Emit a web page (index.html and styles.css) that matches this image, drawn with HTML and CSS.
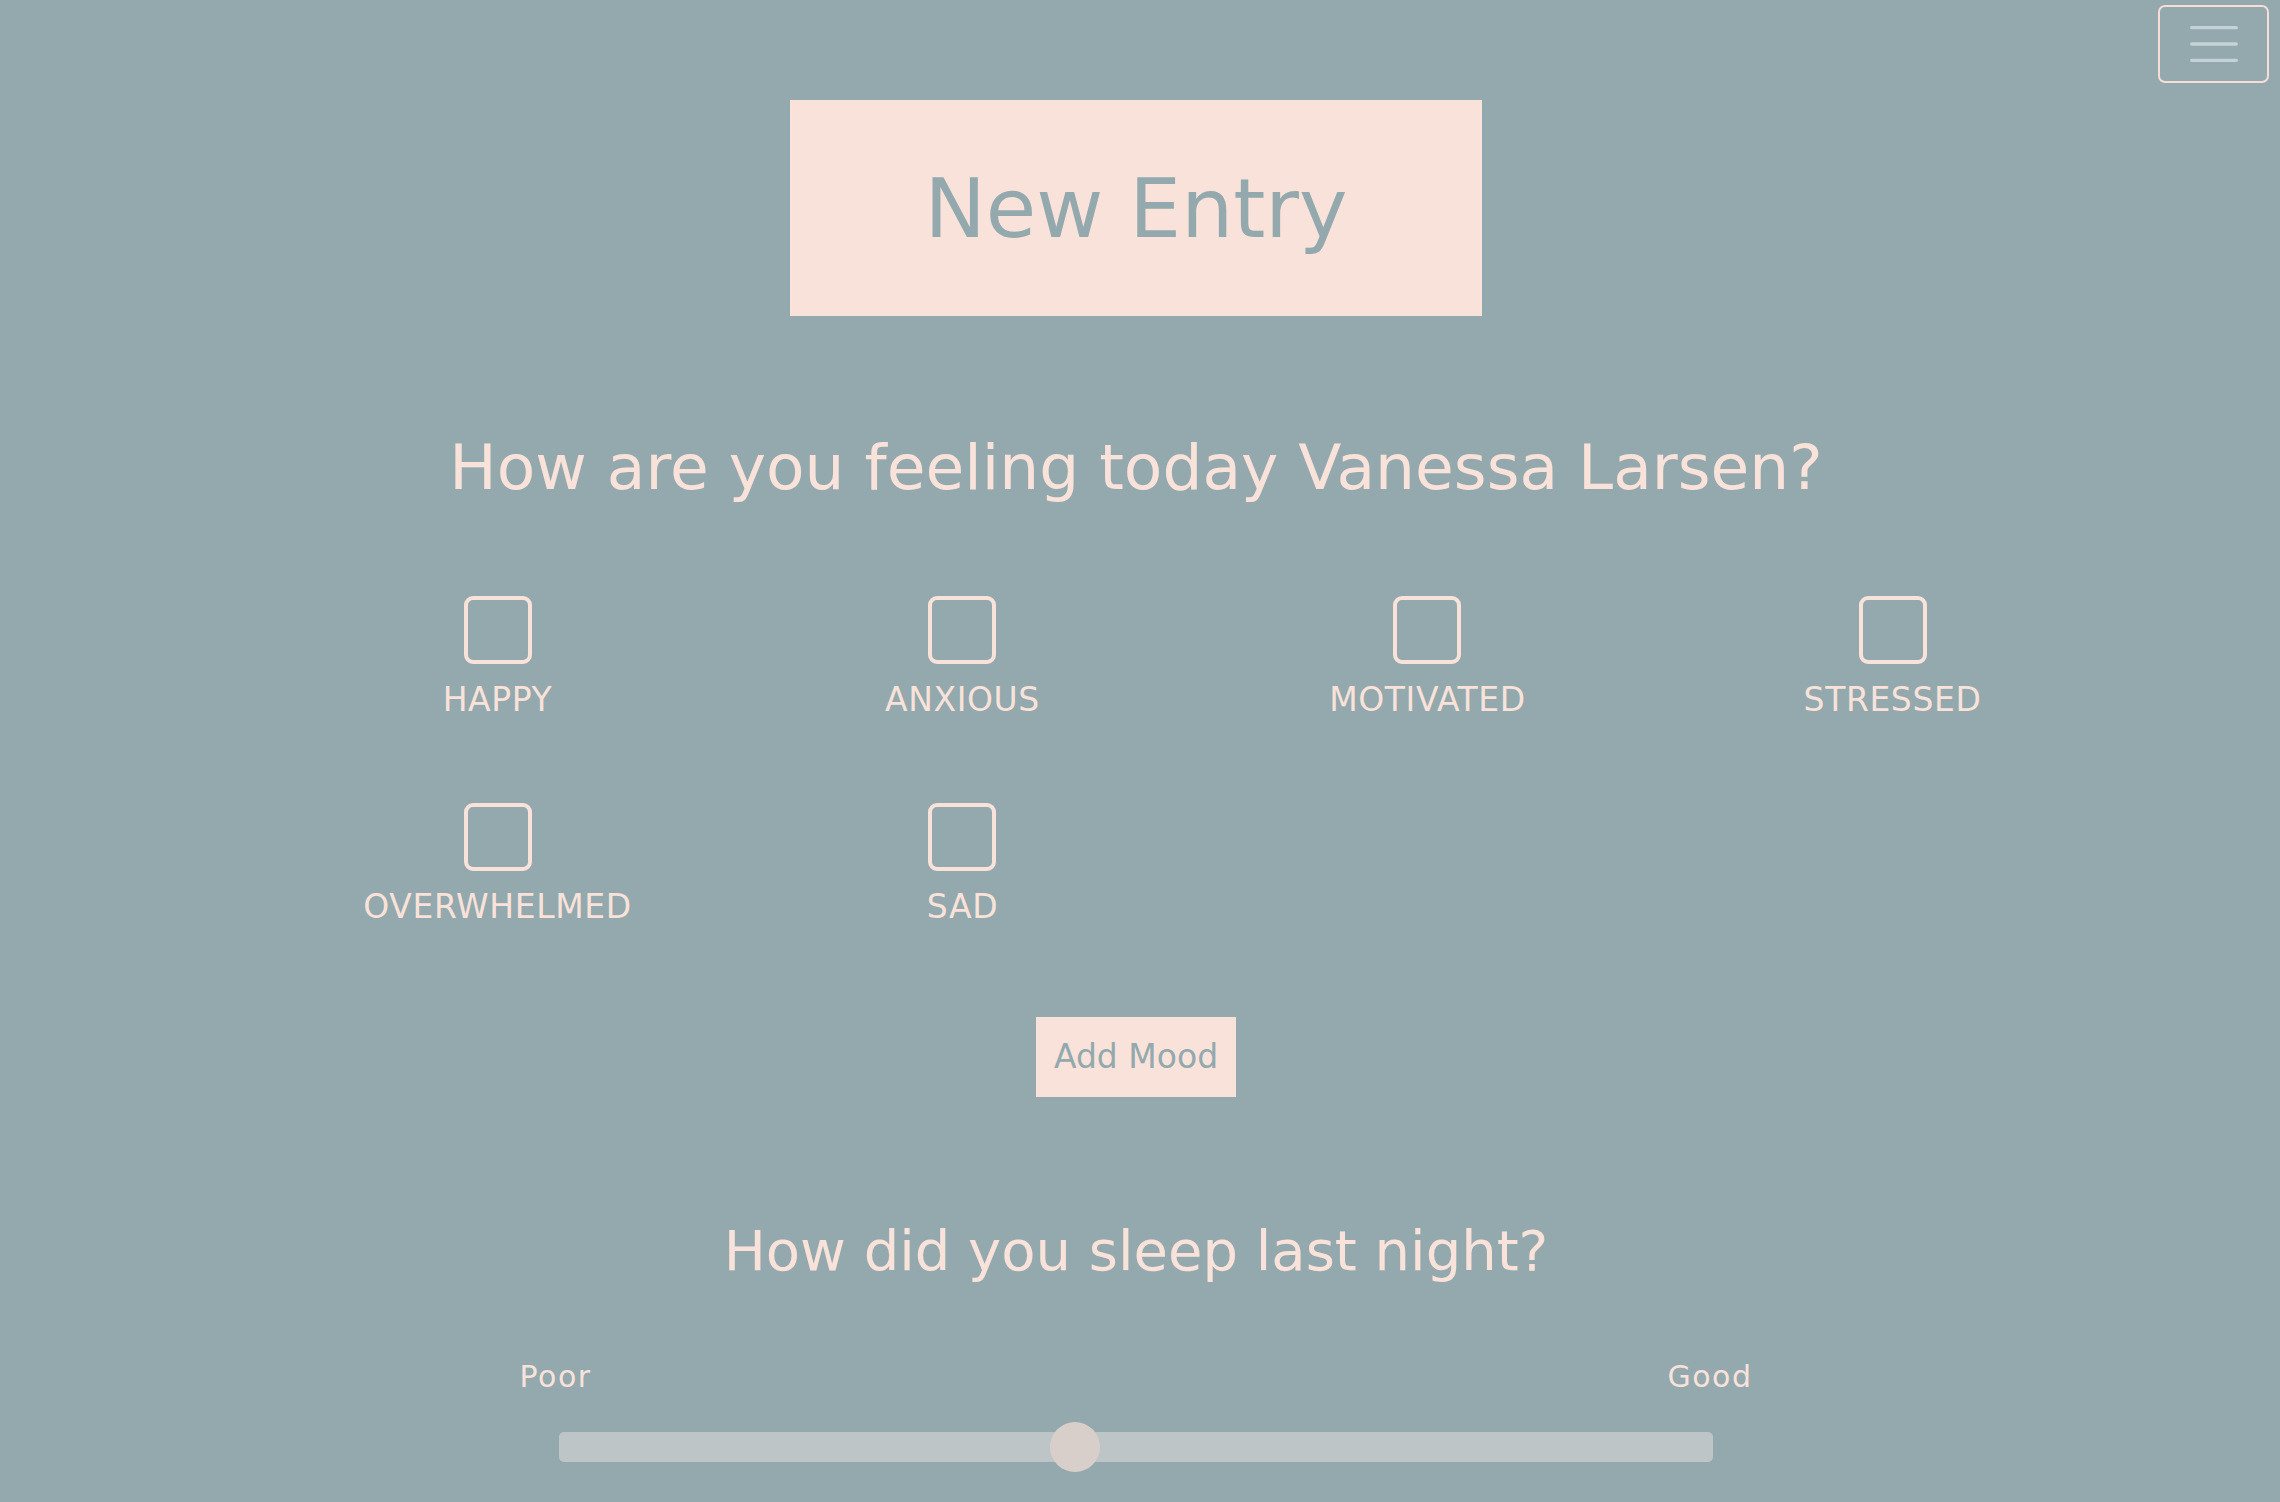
FILE: index.html
```html
<!DOCTYPE html>
<html lang="en">
<head>
<meta charset="utf-8">
<title>New Entry</title>
<link rel="stylesheet" href="styles.css">
</head>
<body>
<nav class="topbar">
  <button class="menu-toggle" type="button" aria-label="Toggle navigation">
    <svg class="menu-icon" width="48" height="36" viewBox="0 0 48 36" aria-hidden="true">
      <path d="M1.7 1.7H46.3M1.7 18H46.3M1.7 34.3H46.3" fill="none" stroke="#c6d3d6" stroke-width="3.3" stroke-linecap="round"/>
    </svg>
  </button>
</nav>
<main class="page">
  <div class="title-box"><h1 class="title">New Entry</h1></div>
  <h2 class="question q-mood">How are you feeling today Vanessa Larsen?</h2>
  <div class="mood-grid">
    <label class="mood"><input class="mood-check" type="checkbox"><span class="mood-name">HAPPY</span></label>
    <label class="mood"><input class="mood-check" type="checkbox"><span class="mood-name">ANXIOUS</span></label>
    <label class="mood"><input class="mood-check" type="checkbox"><span class="mood-name">MOTIVATED</span></label>
    <label class="mood"><input class="mood-check" type="checkbox"><span class="mood-name">STRESSED</span></label>
    <label class="mood"><input class="mood-check" type="checkbox"><span class="mood-name">OVERWHELMED</span></label>
    <label class="mood"><input class="mood-check" type="checkbox"><span class="mood-name">SAD</span></label>
  </div>
  <button class="add-mood" type="button">Add Mood</button>
  <h2 class="question q-sleep">How did you sleep last night?</h2>
  <div class="sleep">
    <div class="sleep-labels"><span>Poor</span><span>Good</span></div>
    <input class="sleep-range" type="range" min="1" max="10" value="5">
  </div>
</main>
</body>
</html>
```
FILE: styles.css
```css
html, body {
  margin: 0;
  padding: 0;
}

body {
  background: #93a9ad;
  color: #f9e2da;
  font-family: "DejaVu Sans", "Liberation Sans", sans-serif;
  width: 2280px;
  height: 1502px;
  overflow: hidden;
}

.topbar {
  display: flex;
  justify-content: flex-end;
  padding: 5px 11px 0 0;
  height: 78px;
}

.menu-toggle {
  width: 111px;
  height: 78px;
  box-sizing: border-box;
  border: 2px solid #f6ddd5;
  border-radius: 7px;
  background: transparent;
  display: flex;
  align-items: center;
  justify-content: center;
  padding: 0;
  margin: 0;
}

.menu-icon {
  display: block;
}

.page {
  display: flex;
  flex-direction: column;
  align-items: center;
  width: 2272px;
}

.title-box {
  margin-top: 17px;
  width: 692px;
  height: 216px;
  background: #f9e2da;
  display: flex;
  align-items: center;
  justify-content: center;
}

.title {
  margin: 0;
  font-size: 82px;
  font-weight: 400;
  line-height: 1.2;
  color: #93a9ad;
  padding-top: 3px;
}

.question {
  margin: 0;
  font-weight: 400;
  line-height: 1.2;
  color: #f9e2da;
}

.q-mood {
  font-size: 63px;
  margin-top: 114px;
}

.mood-grid {
  align-self: flex-start;
  margin-top: 90px;
  margin-left: 265px;
  display: grid;
  grid-template-columns: repeat(4, 465px);
  row-gap: 84px;
  justify-items: center;
}

.mood {
  display: flex;
  flex-direction: column;
  align-items: center;
  gap: 16px;
}

.mood-check {
  -webkit-appearance: none;
  appearance: none;
  width: 68px;
  height: 68px;
  margin: 0;
  box-sizing: border-box;
  border: 4px solid #f9e2da;
  border-radius: 9px;
  background: transparent;
}

.mood-name {
  font-size: 33px;
  line-height: 1.2;
  letter-spacing: 0.6px;
  white-space: nowrap;
}

.add-mood {
  margin-top: 90px;
  width: 200px;
  height: 80px;
  border: none;
  border-radius: 0;
  background: #f9e2da;
  color: #93a9ad;
  font-family: "DejaVu Sans", "Liberation Sans", sans-serif;
  font-size: 33px;
  line-height: 1.2;
  padding: 0;
}

.q-sleep {
  font-size: 56px;
  margin-top: 120px;
}

.sleep {
  margin-top: 75px;
  width: 1233px;
  display: flex;
  flex-direction: column;
  align-items: center;
  gap: 27px;
}

.sleep-labels {
  width: 100%;
  display: flex;
  justify-content: space-between;
  font-size: 30px;
  line-height: 1.2;
  letter-spacing: 1.5px;
}

.sleep-range {
  -webkit-appearance: none;
  appearance: none;
  width: 1154px;
  height: 50px;
  margin: 0;
  background: transparent;
}

.sleep-range::-webkit-slider-runnable-track {
  height: 30px;
  background: #bec5c7;
  border-radius: 5px;
}

.sleep-range::-webkit-slider-thumb {
  -webkit-appearance: none;
  appearance: none;
  width: 50px;
  height: 50px;
  border-radius: 50%;
  background: #d8cfca;
  border: none;
  margin-top: -10px;
}

.sleep-range::-moz-range-track {
  height: 30px;
  background: #bec5c7;
  border-radius: 5px;
}

.sleep-range::-moz-range-thumb {
  width: 50px;
  height: 50px;
  border-radius: 50%;
  background: #d8cfca;
  border: none;
}
```
